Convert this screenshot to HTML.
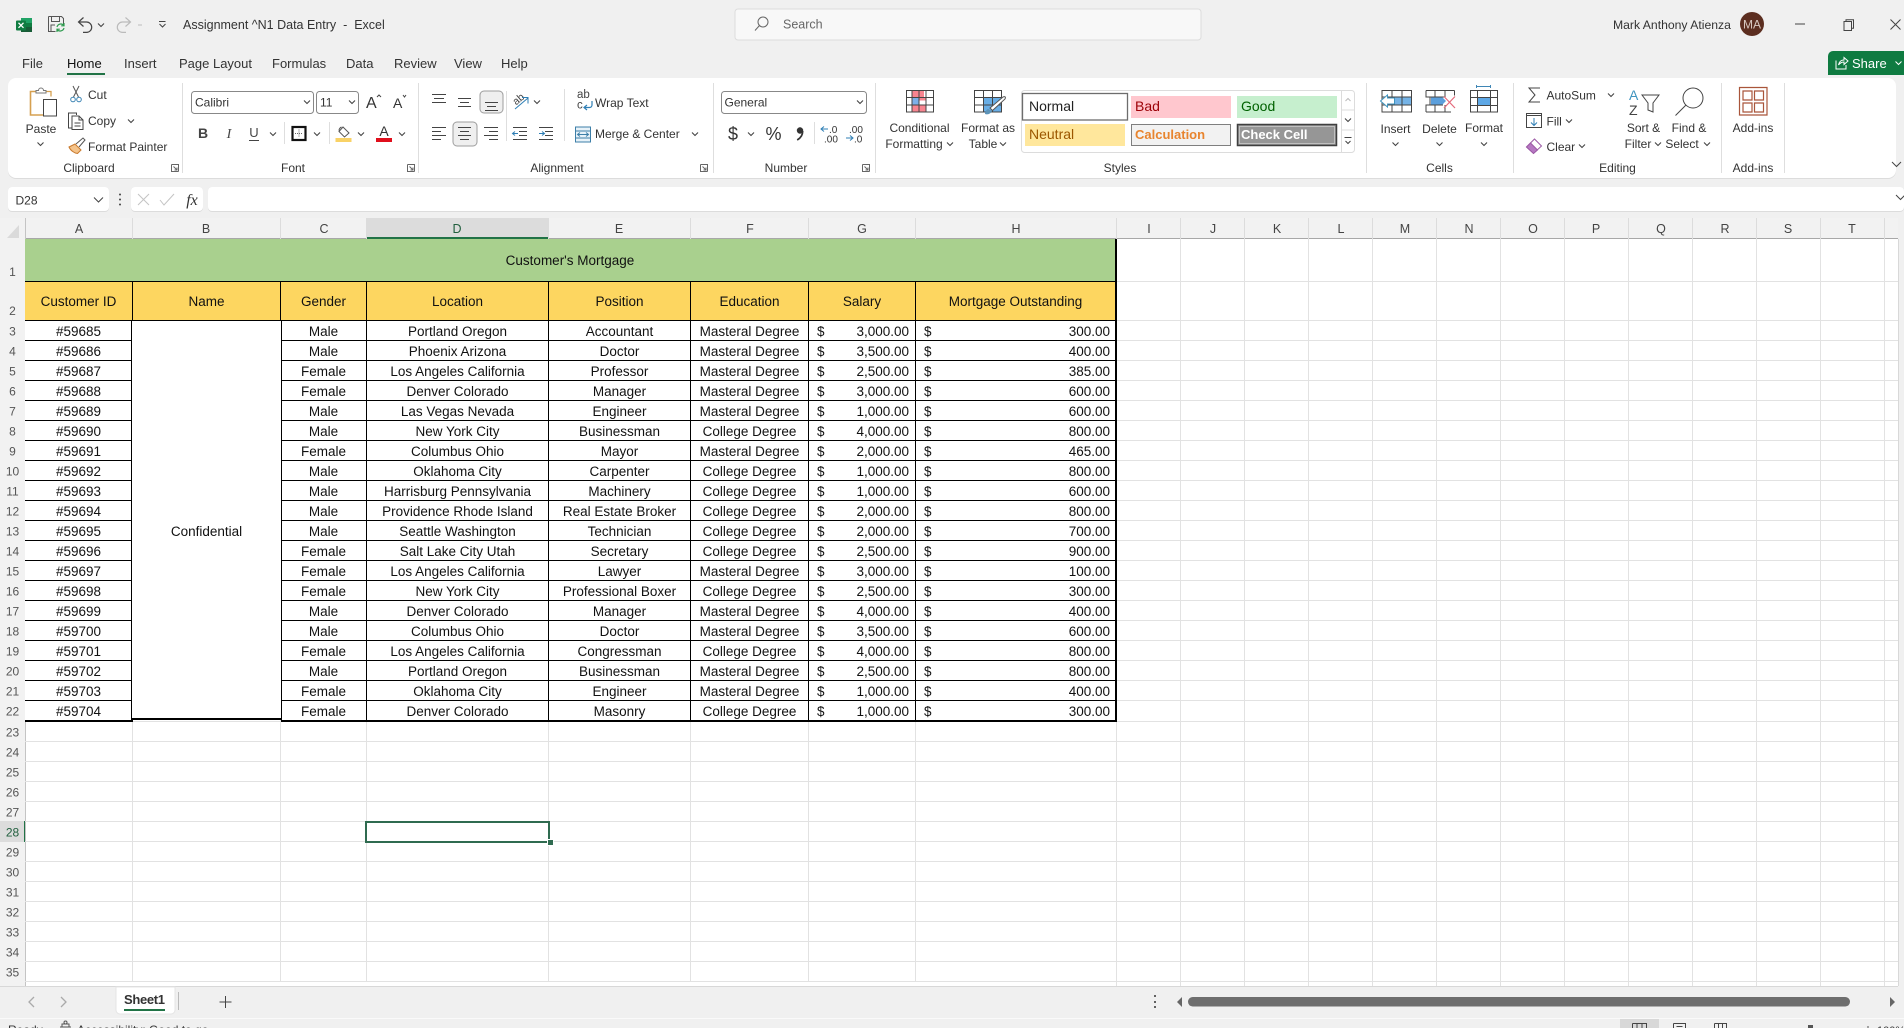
<!DOCTYPE html>
<html><head><meta charset="utf-8"><title>Excel</title>
<style>
html,body{margin:0;padding:0;background:#f0f0f0;width:1904px;height:1028px;overflow:hidden}
svg{position:absolute;left:0;top:0}
svg text{font-family:"Liberation Sans",sans-serif;font-size:12px;fill:#333}
.m{text-anchor:middle}
#g{position:absolute;left:25px;top:239px;display:grid;grid-template-columns:108px 148px 86px 182px 142px 118px 107px 201px;grid-template-rows:43px 39px repeat(19,20px) 21px;font:13.5px "Liberation Sans",sans-serif;color:#111}
#g div{box-sizing:border-box;border-right:1px solid #000;border-bottom:1px solid #000;display:flex;align-items:center;justify-content:center;background:#fff;white-space:nowrap;padding-top:1px}
#g .t{grid-column:1/9;background:#a9d08e;border-right:2px solid #000}
#g .h{background:#fdd660}
#g .r{border-right:2px solid #000}
#g .b{grid-area:3/2/23/3;margin:-1px -1px 2px -2px;border-top:1px solid #000;border-left:1px solid #000;border-right:1px solid #000;border-bottom:2px solid #000;padding-top:23px;z-index:1}
#g div:nth-last-child(-n+7){border-bottom:2px solid #000}
#g div:nth-child(7n+3):nth-child(n+17){border-right:2px solid #000}
#g .m{justify-content:space-between;padding:1px 6px 0 8px}
#g div:nth-child(7n+3):nth-child(n+17){padding-right:5px}
s{text-decoration:none}
#sel{position:absolute;left:365px;top:821px;width:185px;height:22px;box-sizing:border-box;border:2px solid #2f6b50}
#hd{position:absolute;left:547px;top:839px;border:1px solid #fff;width:5px;height:5px;background:#2f6b50}
</style></head><body>
<svg width="1904" height="1028" viewBox="0 0 1904 1028">
<defs>
<path id="v" d="M-3-1.500 0 1.500 3-1.500" fill="none" stroke="#444" stroke-width="1.100"/>
</defs>
<rect width="1904" height="1028" fill="#f0f0f0"/>

<!-- title bar -->
<rect x="21" y="18" width="11" height="14" fill="#185c37"/><rect x="21" y="18" width="11" height="5" fill="#21a366"/><rect x="21" y="23" width="11" height="4" fill="#107c41"/>
<rect x="16" y="20.500" width="10" height="10" rx="1" fill="#107c41"/>
<path d="M18.500 22.800l5 5M23.500 22.800l-5 5" stroke="#fff" stroke-width="1.300"/>
<path d="M48.500 16.500h13l2 2v6M48.500 16.500v15h7M51.500 16.500v5h8v-5M51 31v-6h4" fill="none" stroke="#555"/>
<path d="M57 27a4 4 0 0 1 7-1.500M64 28a4 4 0 0 1-7 1.500M64 23v2.800h-2.800M57 32v-2.800h2.800" fill="none" stroke="#2d9b4e" stroke-width="1.200"/>
<path d="M83.500 17.500l-5 4.500 5 4.500M78.500 22h8a5.200 5.200 0 0 1 0 10.400h-3.500" fill="none" stroke="#444" stroke-width="1.200"/>
<use href="#v" x="101" y="25"/>
<path d="M125.500 17.500l5 4.500-5 4.500M130.500 22h-8a5.200 5.200 0 0 0 0 10.400h3.500" fill="none" stroke="#bbb" stroke-width="1.200"/>
<path d="M138 25h4" stroke="#bbb"/>
<path d="M159 21.500h6.500M159.500 24l3 3 3-3" fill="none" stroke="#444"/>
<text x="183" y="29" xml:space="preserve" style="font-size:12.500px;fill:#333">Assignment ^N1 Data Entry  -  Excel</text>

<rect x="735" y="9" width="466" height="31" rx="3" fill="#f8f8f8" stroke="#dcdcdc"/>
<circle cx="763" cy="22" r="5" fill="none" stroke="#666"/><path d="M759.500 25.500l-4.500 5" stroke="#666"/>
<text x="783" y="28.500" style="font-size:12.500px;fill:#666">Search</text>

<text x="1613" y="29" style="font-size:12.200px">Mark Anthony Atienza</text>
<circle cx="1752" cy="24" r="12" fill="#5c2e20"/><text x="1752" y="28.500" class="m" style="font-size:12px;fill:#d8c8c0">MA</text>
<path d="M1795 24h10" stroke="#444"/>
<path d="M1844 21.500h7.500v9h-7.500zM1846 21.500v-1.800h7.500v8.500h-2" fill="none" stroke="#444"/>
<path d="M1890.500 19.500l10 10M1900.500 19.500l-10 10" stroke="#444"/>

<!-- tabs -->
<text x="22" y="68" style="font-size:13px">File</text>
<text x="67" y="68" style="font-size:13px;fill:#111">Home</text>
<text x="124" y="68" style="font-size:13px">Insert</text>
<text x="179" y="68" style="font-size:13px">Page Layout</text>
<text x="272" y="68" style="font-size:13px">Formulas</text>
<text x="346" y="68" style="font-size:13px">Data</text>
<text x="394" y="68" style="font-size:13px">Review</text>
<text x="454" y="68" style="font-size:13px">View</text>
<text x="501" y="68" style="font-size:13px">Help</text>
<rect x="67" y="73" width="38" height="2" fill="#217346"/>
<path d="M1828 75V56a5 5 0 0 1 5-5h71v24z" fill="#0f7b41"/>
<path d="M1836 60.500v8.500h10v-4M1838.500 65c.5-3 2.500-5 5.500-5v-2.500l4 3.500-4 3.500v-2.500c-2 0-4 1-5.500 3z" fill="none" stroke="#fff"/>
<text x="1852" y="68" style="font-size:13px;fill:#fff">Share</text>
<path d="M1895.500 61.500l3 3 3-3" fill="none" stroke="#fff"/>

<!-- ribbon -->
<rect x="8" y="79" width="1888" height="100" rx="8" fill="#dcdcdc"/>
<rect x="8" y="78" width="1888" height="100" rx="8" fill="#fff"/>
<path d="M182.500 83v90M418.500 83v90M713.500 83v90M875.500 83v90M1366.500 83v90M1513.500 83v90M1721.500 83v90M1784.500 83v90" stroke="#dedede"/>
<path d="M284.500 122v22M329.500 122v22M506.500 91v50M564.500 89v52M814.500 122v22" stroke="#dedede"/>

<!-- clipboard -->
<path d="M36 91.500h-5.500v23.500h13" fill="none" stroke="#d6a050" stroke-width="1.600"/>
<path d="M46 91.500h5v5" fill="none" stroke="#d6a050" stroke-width="1.300"/>
<path d="M36 92.500v-2h2.500a2.500 2.500 0 0 1 5 0H46v2.500h-10z" fill="#fff" stroke="#777"/>
<rect x="43.500" y="99.500" width="13" height="16.500" fill="#fff" stroke="#444"/>
<text x="41" y="133" class="m">Paste</text><use href="#v" x="40.500" y="144"/>
<path d="M73 86l5.500 11M79 86l-5.500 11" stroke="#555" fill="none"/><circle cx="73" cy="99.500" r="2.300" fill="none" stroke="#3f86b5"/><circle cx="79" cy="99.500" r="2.300" fill="none" stroke="#3f86b5"/>
<text x="88" y="99">Cut</text>
<path d="M71.500 128h-3v-15h8l0 2M72 116h7l4 4v9.500H72zM79 116v4h4M74.500 123h6M74.500 126h6" fill="none" stroke="#444"/>
<text x="88" y="125">Copy</text><use href="#v" x="131" y="121"/>
<path d="M69 147l6-3 6 6-3.500 3.500c-3-.2-7-3-8.500-6.500z" fill="#f4c38a" stroke="#c97a2e"/>
<path d="M76 144l7-6 2 2-6 7" fill="#fff" stroke="#555"/>
<text x="88" y="151">Format Painter</text>
<text x="89" y="172" class="m">Clipboard</text>
<path d="M171.500 164.500h7v7M171.500 164.500v7h7M173.500 166.500l3.500 3.500M177 167.500v2.500h-2.500" fill="none" stroke="#666"/>

<!-- font -->
<rect x="191.500" y="91.500" width="122" height="22" rx="3" fill="#fff" stroke="#888"/>
<text x="195" y="106.500">Calibri</text><use href="#v" x="307" y="102"/>
<rect x="316.500" y="91.500" width="42" height="22" rx="3" fill="#fff" stroke="#888"/>
<text x="320" y="106.500">11</text><use href="#v" x="352" y="102"/>
<text x="366" y="108" style="font-size:16px">A</text><path d="M377 97l2-2 2 2" fill="none" stroke="#444"/>
<text x="393" y="108" style="font-size:14px">A</text><path d="M403 95l1.500 2 1.500-2" fill="none" stroke="#444"/>
<text x="203" y="138" class="m" style="font-size:14px;font-weight:bold;fill:#444">B</text>
<text x="229" y="138" class="m" style="font-size:14px;font-style:italic;font-family:'Liberation Serif',serif;fill:#444">I</text>
<text x="254" y="137" class="m" style="font-size:13px;fill:#444">U</text><path d="M249 140.500h10" stroke="#444"/>
<use href="#v" x="273" y="134"/>
<rect x="292.500" y="127" width="13" height="13" fill="none" stroke="#111" stroke-width="2.200"/>
<path d="M299 129.500v8M295 133.500h8" stroke="#666" stroke-dasharray="1 1"/>
<use href="#v" x="317" y="134"/>
<path d="M343 127l6 6-4.500 4-5.500-5.500zM339.500 131c-1-1 0-3 2-4" fill="none" stroke="#555"/><rect x="335.500" y="138" width="16" height="4" fill="#f9d266"/>
<use href="#v" x="361" y="134"/>
<text x="384" y="136" class="m" style="font-size:14px">A</text><rect x="376" y="138" width="16" height="4" fill="#e00f1c"/>
<use href="#v" x="402" y="134"/>
<text x="293" y="172" class="m">Font</text>
<path d="M407.500 164.500h7v7M407.500 164.500v7h7M409.500 166.500l3.500 3.500M413 167.500v2.500h-2.500" fill="none" stroke="#666"/>

<!-- alignment -->
<rect x="480" y="91" width="23" height="22" rx="4" fill="#efefef" stroke="#9d9d9d"/>
<rect x="453" y="122" width="24" height="24" rx="4" fill="#efefef" stroke="#9d9d9d"/>
<path d="M432 94.500h14M434 98.500h10M432 102.500h14M458 98.500h13M460 102.500h9M458 106.500h13M485 102.500h13M487 106.500h9M485 110.500h13" stroke="#444" fill="none"/>
<path d="M432 127.500h14M432 131.500h9M432 135.500h14M432 139.500h9M458 127.500h13M460 131.500h9M458 135.500h13M460 139.500h9M484 127.500h14M489 131.500h9M484 135.500h14M489 139.500h9" stroke="#444" fill="none"/>
<text x="513" y="103" style="font-size:10.500px;fill:#444" transform="rotate(-40 518 100)">ab</text>
<path d="M515 109l13-11M522 97.500h6v6" fill="none" stroke="#2f7fb5"/>
<use href="#v" x="537" y="102"/>
<path d="M513 127.500h14M513 139.500h14M519 131.500h8M519 135.500h8" fill="none" stroke="#444"/>
<path d="M513 133.500h5M515 131.500l-2.500 2 2.500 2" fill="none" stroke="#2f7fb5"/>
<path d="M539 127.500h14M539 139.500h14M545 131.500h8M545 135.500h8" fill="none" stroke="#444"/>
<path d="M539 133.500h5M542 131.500l2.500 2-2.500 2" fill="none" stroke="#2f7fb5"/>
<text x="577" y="98" style="font-size:11.500px;fill:#444">ab</text><text x="577" y="108.500" style="font-size:11.500px;fill:#444">c</text>
<path d="M592 101v4a2.500 2.500 0 0 1-2.500 2.500H584M587 105l-3 2.500 3 2.500" fill="none" stroke="#2f7fb5" stroke-width="1.200"/>
<text x="595" y="107">Wrap Text</text>
<rect x="575.500" y="127" width="15" height="15" fill="#e7f2f9" stroke="#3d7fa8"/><path d="M575.500 131h15M575.500 138h15M578 134.500h10M580 132.500l-2.500 2 2.500 2M586 132.500l2.500 2-2.500 2" fill="none" stroke="#3d7fa8"/>
<text x="595" y="138">Merge &amp; Center</text><use href="#v" x="695" y="134"/>
<text x="557" y="172" class="m">Alignment</text>
<path d="M700.500 164.500h7v7M700.500 164.500v7h7M702.500 166.500l3.500 3.500M706 167.500v2.500h-2.500" fill="none" stroke="#666"/>

<!-- number -->
<rect x="721.500" y="91.500" width="145" height="22" rx="3" fill="#fff" stroke="#888"/>
<text x="724.500" y="106.500">General</text><use href="#v" x="860" y="102"/>
<text x="733" y="140" class="m" style="font-size:18px">$</text><use href="#v" x="751" y="134"/>
<text x="773.500" y="140" class="m" style="font-size:18px">%</text>
<circle cx="800" cy="130.500" r="3.200" fill="#333"/><path d="M802.700 131c0 4-2 7-5.500 9" fill="none" stroke="#333" stroke-width="1.700"/>
<path d="M828 129h-7M824 126.500l-3 2.500 3 2.500" fill="none" stroke="#2f7fb5"/>
<text x="829" y="133" style="font-size:10px">.0</text><text x="824" y="142.500" style="font-size:10px">.00</text>
<text x="849" y="133" style="font-size:10px">.00</text>
<path d="M846 138h7M850 135.500l3 2.500-3 2.500" fill="none" stroke="#2f7fb5"/><text x="854" y="142.500" style="font-size:10px">.0</text>
<text x="786" y="172" class="m">Number</text>
<path d="M862.500 164.500h7v7M862.500 164.500v7h7M864.500 166.500l3.500 3.500M868 167.500v2.500h-2.500" fill="none" stroke="#666"/>

<!-- styles group -->
<path d="M912 90.500h12v6.500h2v3.500h-7v4h7v7h-14z" fill="#f7848f"/><rect x="912" y="97" width="7" height="7.500" fill="#7cb0e8"/>
<path d="M906.500 90.500h27v21.500h-27zM906.500 97.500h27M906.500 105h27M912 90.500v21.500M919 90.500v21.500M926 90.500v21.500" fill="none" stroke="#444"/>
<text x="919.500" y="132" class="m">Conditional</text><text x="914" y="148" class="m">Formatting</text><use href="#v" x="950" y="144"/>
<rect x="983" y="97" width="18" height="15" fill="#69aee6"/>
<path d="M974.500 90.500h27v21.500h-27zM974.500 97.500h27M974.500 105h27M983.500 90.500v21.500M992.500 90.500v21.500" fill="none" stroke="#444"/>
<path d="M1003 97l-13 11 2.500 2.500L1005 99c1-2-0-3-2-2z" fill="#fff" stroke="#555"/><path d="M988 109c-2 1-3 3-3 5 3 1 6-.5 7-3z" fill="#5c93b8"/>
<text x="988" y="132" class="m">Format as</text><text x="983" y="148" class="m">Table</text><use href="#v" x="1003" y="144"/>

<rect x="1021.500" y="90.500" width="333" height="62" rx="3" fill="#fff" stroke="#dcdcdc"/>
<rect x="1022.500" y="93.500" width="105" height="26.500" fill="#fff" stroke="#6d6d6d" stroke-width="1.300"/>
<text x="1029" y="111" style="font-size:14px;fill:#222">Normal</text>
<rect x="1131" y="96" width="100" height="22" fill="#ffc7ce"/><text x="1135" y="111" style="font-size:14px;fill:#9c0006">Bad</text>
<rect x="1237" y="96" width="100" height="22" fill="#c6efce"/><text x="1241" y="111" style="font-size:14px;fill:#006100">Good</text>
<rect x="1025" y="124" width="100" height="22" fill="#ffe79c"/><text x="1029" y="139" style="font-size:14px;fill:#9c5700">Neutral</text>
<rect x="1131.500" y="124.500" width="99" height="21" fill="#f2f2f2" stroke="#7f7f7f"/><text x="1135" y="139" style="font-size:13px;font-weight:bold;fill:#e8842e">Calculation</text>
<rect x="1237.500" y="124.500" width="99" height="21" fill="#969696" stroke="#3f3f3f" stroke-width="1.500"/><rect x="1239.500" y="126.500" width="95" height="17" fill="none" stroke="#ddd" stroke-width=".6"/><text x="1241" y="139" style="font-size:13px;font-weight:bold;fill:#fff">Check Cell</text>
<path d="M1341.500 90.500v62M1341.500 110h13M1341.500 130h13" stroke="#dcdcdc" fill="none"/>
<path d="M1345.500 101l2.500-2.500 2.500 2.500" fill="none" stroke="#bbb"/>
<use href="#v" x="1348" y="120"/>
<path d="M1344.500 137.500h7M1345.500 141l2.500 2.500 2.500-2.500" fill="none" stroke="#444"/>
<text x="1120" y="172" class="m">Styles</text>

<!-- cells -->
<rect x="1391" y="97" width="20.500" height="8" fill="#75b3e6"/>
<path d="M1382 90.500h29.500v21.500h-29.500zM1382 97h29.500M1382 105h29.500M1392 90.500v21.500M1402 90.500v21.500" fill="none" stroke="#444"/>
<path d="M1380.500 101l7-6v3h7v6h-7v3z" fill="#fff" stroke="#3f94bf"/>
<text x="1395.500" y="133" class="m">Insert</text><use href="#v" x="1395.500" y="144"/>
<path d="M1431 97h11l4 4-4 4h-11z" fill="#5b9fdc"/>
<path d="M1426 90.500h28.500M1426 112h25M1426 90.500v6.500h4v8h-4v7M1435 90.500v6.500M1445 90.500v6.500M1435 105v7M1445 105v7M1454.500 90.500v5M1426 97h18M1426 105h17" fill="none" stroke="#444"/>
<path d="M1444 96.500l11 11.500M1455 96.500l-11 11.500" stroke="#e4697a" stroke-width="1.200"/>
<text x="1439.500" y="133" class="m">Delete</text><use href="#v" x="1439.500" y="144"/>
<rect x="1477" y="97" width="13" height="8" fill="#5ea8e6"/>
<path d="M1470.500 90.500h27v21.500h-27zM1470.500 97.500h27M1470.500 105.500h27M1477.500 90.500v21.500M1490.500 90.500v21.500" fill="none" stroke="#444"/>
<path d="M1476.500 86.500h14M1476.500 85v3M1490.500 85v3" stroke="#3f86b5" fill="none"/>
<text x="1484" y="132" class="m">Format</text><use href="#v" x="1484" y="144"/>
<text x="1439.500" y="172" class="m">Cells</text>

<!-- editing -->
<path d="M1540 88h-11l6 7-6 7h11" fill="none" stroke="#444"/>
<text x="1546.500" y="99.500">AutoSum</text><use href="#v" x="1611" y="95"/>
<rect x="1526.500" y="113.500" width="15" height="14" fill="none" stroke="#444"/><path d="M1526.500 115.500h15" stroke="#444"/><path d="M1534 118v7M1531 122.500l3 3 3-3" fill="none" stroke="#2f7fb5"/>
<text x="1546.500" y="125.500">Fill</text><use href="#v" x="1569" y="121"/>
<path d="M1526.500 147l8-8 7 7-8 7.500z" fill="#fff" stroke="#9c5aa6"/><path d="M1526.500 147l4-4 7 7-4 3.500z" fill="#b678c2" stroke="#9c5aa6"/>
<text x="1546.500" y="151">Clear</text><use href="#v" x="1582" y="146"/>
<text x="1629" y="100" style="font-size:14px;fill:#3f94bf">A</text><text x="1629" y="115" style="font-size:14px;fill:#444">Z</text>
<path d="M1642 95h17l-6 8v9l-5-2v-7z" fill="none" stroke="#444"/>
<text x="1643.500" y="132" class="m">Sort &amp;</text><text x="1638" y="148" class="m">Filter</text><use href="#v" x="1658" y="144"/>
<circle cx="1693" cy="98" r="10" fill="none" stroke="#444"/><path d="M1686 105l-10.500 10.500" stroke="#444"/>
<text x="1689" y="132" class="m">Find &amp;</text><text x="1682" y="148" class="m">Select</text><use href="#v" x="1707" y="144"/>
<text x="1617.500" y="172" class="m">Editing</text>

<path d="M1739.500 87.500h27.500v27.500h-27.500z" fill="none" stroke="#a9553a" stroke-width="1.200"/>
<path d="M1743 91h9v9h-9zM1754.500 91h9v9h-9zM1743 103h9v9h-9zM1754.500 103h9v9h-9z" fill="none" stroke="#a9553a" stroke-width="1.200"/>
<text x="1753" y="132" class="m">Add-ins</text><text x="1753" y="172" class="m">Add-ins</text>
<path d="M1892 162l4.500 4.500 4.500-4.500" fill="none" stroke="#444"/>

<!-- formula bar -->
<rect x="8" y="187" width="101" height="25" rx="4" fill="#dcdcdc"/><rect x="8" y="187" width="101" height="24" rx="4" fill="#fff"/>
<text x="15.500" y="204.500">D28</text><path d="M94 197.500l4.500 4.500 4.500-4.500" fill="none" stroke="#444"/>
<circle cx="120" cy="194.500" r="1" fill="#444"/><circle cx="120" cy="199.500" r="1" fill="#444"/><circle cx="120" cy="204.500" r="1" fill="#444"/>
<rect x="131" y="187" width="72" height="25" rx="4" fill="#dcdcdc"/><rect x="131" y="187" width="72" height="24" rx="4" fill="#fff"/>
<path d="M138 194l11 11M149 194l-11 11M160 200l4 5 10-11" fill="none" stroke="#c4c4c4"/>
<text x="192" y="205" class="m" style="font-family:'Liberation Serif',serif;font-style:italic;font-size:16px;fill:#333">fx</text>
<rect x="208" y="187" width="1696" height="25" rx="4" fill="#dcdcdc"/><rect x="208" y="187" width="1696" height="24" rx="4" fill="#fff"/>
<path d="M1896 195l4.500 4.500 4.500-4.500" fill="none" stroke="#444"/>

<!-- sheet -->
<rect x="25" y="239" width="1873" height="747" fill="#fff"/>
<rect x="0" y="218" width="1898" height="21" fill="#f2f2f2"/>
<rect x="0" y="239" width="25" height="747" fill="#f2f2f2"/>
<path d="M19 225v13H7z" fill="#dadada"/>
<rect x="366" y="218" width="183" height="19" fill="#dcdcdc"/>
<rect x="25" y="238" width="1873" height="1" fill="#a8a8a8"/>
<rect x="366" y="237" width="183" height="2" fill="#217346"/>
<rect x="0" y="821" width="25" height="21" fill="#dcdcdc"/>
<rect x="24" y="821" width="2" height="21" fill="#217346"/>
<path d="M25.500 218v768" stroke="#c4c4c4" fill="none"/>
<path d="M132.500 218v21M280.500 218v21M366.500 218v21M548.500 218v21M690.500 218v21M808.500 218v21M915.500 218v21M1116.500 218v21M1180.500 218v21M1244.500 218v21M1308.500 218v21M1372.500 218v21M1436.500 218v21M1500.500 218v21M1564.500 218v21M1628.500 218v21M1692.500 218v21M1756.500 218v21M1820.500 218v21M1884.500 218v21" stroke="#dcdcdc" fill="none"/>
<path d="M132.500 239v743M280.500 239v743M366.500 239v743M548.500 239v743M690.500 239v743M808.500 239v743M915.500 239v743M1116.500 239v747M1180.500 239v747M1244.500 239v747M1308.500 239v747M1372.500 239v747M1436.500 239v747M1500.500 239v747M1564.500 239v747M1628.500 239v747M1692.500 239v747M1756.500 239v747M1820.500 239v747M1884.500 239v747" stroke="#e2e2e2" fill="none"/>
<path d="M25 281.500h1873M25 320.500h1873M25 340.500h1873M25 360.500h1873M25 380.500h1873M25 400.500h1873M25 420.500h1873M25 440.500h1873M25 460.500h1873M25 480.500h1873M25 500.500h1873M25 520.500h1873M25 540.500h1873M25 560.500h1873M25 580.500h1873M25 600.500h1873M25 620.500h1873M25 640.500h1873M25 660.500h1873M25 680.500h1873M25 700.500h1873M25 721.500h1873M25 741.500h1873M25 761.500h1873M25 781.500h1873M25 801.500h1873M25 821.500h1873M25 841.500h1873M25 861.500h1873M25 881.500h1873M25 901.500h1873M25 921.500h1873M25 941.500h1873M25 961.500h1873M25 981.500h1873" stroke="#e2e2e2" fill="none"/>
<path d="M1898.500 239v747M0 986.500h1898" stroke="#d8d8d8" fill="none"/>
<text x="79" y="233" class="m" style="font-size:12.500px;fill:#444">A</text><text x="206" y="233" class="m" style="font-size:12.500px;fill:#444">B</text><text x="324" y="233" class="m" style="font-size:12.500px;fill:#444">C</text><text x="457" y="233" class="m" style="font-size:12.500px;fill:#215f3e">D</text><text x="619" y="233" class="m" style="font-size:12.500px;fill:#444">E</text><text x="750" y="233" class="m" style="font-size:12.500px;fill:#444">F</text><text x="862" y="233" class="m" style="font-size:12.500px;fill:#444">G</text><text x="1016" y="233" class="m" style="font-size:12.500px;fill:#444">H</text><text x="1149" y="233" class="m" style="font-size:12.500px;fill:#444">I</text><text x="1213" y="233" class="m" style="font-size:12.500px;fill:#444">J</text><text x="1277" y="233" class="m" style="font-size:12.500px;fill:#444">K</text><text x="1341" y="233" class="m" style="font-size:12.500px;fill:#444">L</text><text x="1405" y="233" class="m" style="font-size:12.500px;fill:#444">M</text><text x="1469" y="233" class="m" style="font-size:12.500px;fill:#444">N</text><text x="1533" y="233" class="m" style="font-size:12.500px;fill:#444">O</text><text x="1596" y="233" class="m" style="font-size:12.500px;fill:#444">P</text><text x="1661" y="233" class="m" style="font-size:12.500px;fill:#444">Q</text><text x="1725" y="233" class="m" style="font-size:12.500px;fill:#444">R</text><text x="1788" y="233" class="m" style="font-size:12.500px;fill:#444">S</text><text x="1852" y="233" class="m" style="font-size:12.500px;fill:#444">T</text>
<text x="12.500" y="276" class="m" style="fill:#555">1</text><text x="12.500" y="315" class="m" style="fill:#555">2</text><text x="12.500" y="335.500" class="m" style="fill:#555">3</text><text x="12.500" y="355.500" class="m" style="fill:#555">4</text><text x="12.500" y="375.500" class="m" style="fill:#555">5</text><text x="12.500" y="395.500" class="m" style="fill:#555">6</text><text x="12.500" y="415.500" class="m" style="fill:#555">7</text><text x="12.500" y="435.500" class="m" style="fill:#555">8</text><text x="12.500" y="455.500" class="m" style="fill:#555">9</text><text x="12.500" y="475.500" class="m" style="fill:#555">10</text><text x="12.500" y="495.500" class="m" style="fill:#555">11</text><text x="12.500" y="515.500" class="m" style="fill:#555">12</text><text x="12.500" y="535.500" class="m" style="fill:#555">13</text><text x="12.500" y="555.500" class="m" style="fill:#555">14</text><text x="12.500" y="575.500" class="m" style="fill:#555">15</text><text x="12.500" y="595.500" class="m" style="fill:#555">16</text><text x="12.500" y="615.500" class="m" style="fill:#555">17</text><text x="12.500" y="635.500" class="m" style="fill:#555">18</text><text x="12.500" y="655.500" class="m" style="fill:#555">19</text><text x="12.500" y="675.500" class="m" style="fill:#555">20</text><text x="12.500" y="695.500" class="m" style="fill:#555">21</text><text x="12.500" y="715.500" class="m" style="fill:#555">22</text><text x="12.500" y="736.500" class="m" style="fill:#555">23</text><text x="12.500" y="756.500" class="m" style="fill:#555">24</text><text x="12.500" y="776.500" class="m" style="fill:#555">25</text><text x="12.500" y="796.500" class="m" style="fill:#555">26</text><text x="12.500" y="816.500" class="m" style="fill:#555">27</text><text x="12.500" y="836.500" class="m" style="fill:#215f3e">28</text><text x="12.500" y="856.500" class="m" style="fill:#555">29</text><text x="12.500" y="876.500" class="m" style="fill:#555">30</text><text x="12.500" y="896.500" class="m" style="fill:#555">31</text><text x="12.500" y="916.500" class="m" style="fill:#555">32</text><text x="12.500" y="936.500" class="m" style="fill:#555">33</text><text x="12.500" y="956.500" class="m" style="fill:#555">34</text><text x="12.500" y="976.500" class="m" style="fill:#555">35</text>

<!-- sheet tabs -->
<path d="M116 987h59v23a4 4 0 0 1-4 4h-51a4 4 0 0 1-4-4z" fill="#fff" stroke="#e4e4e4"/>
<text x="144.500" y="1004" class="m" style="font-size:13px;font-weight:bold;fill:#333" textLength="41">Sheet1</text>
<rect x="124" y="1009" width="41" height="2" fill="#217346"/>
<path d="M178.500 992v18" stroke="#bbb"/>
<path d="M34 997l-5 5 5 5M61 997l5 5-5 5" fill="none" stroke="#aaa" stroke-width="1.300"/>
<path d="M225.500 996v12M219.500 1002h12" stroke="#444"/>
<circle cx="1155" cy="996" r="1" fill="#333"/><circle cx="1155" cy="1002" r="1" fill="#333"/><circle cx="1155" cy="1007" r="1" fill="#333"/>
<path d="M1177 1002l5-5v10z" fill="#666"/>
<rect x="1188" y="997" width="662" height="9.500" rx="4.700" fill="#6e6e6e"/>
<path d="M1895 1002l-5-5v10z" fill="#666"/>
<path d="M0 1018.500h1904" stroke="#fafafa"/>

<!-- status bar -->
<text x="8" y="1034">Ready</text>
<path d="M60 1027h11M62 1027v-3h7v3M65.500 1021a1.500 1.500 0 1 1 0 3 1.500 1.500 0 1 1 0-3" fill="none" stroke="#555"/>
<text x="77" y="1034">Accessibility: Good to go</text>
<rect x="1620" y="1019" width="39" height="9" fill="#d8d8d8"/>
<path d="M1632.500 1023.500h14v6M1632.500 1023.500v6M1637 1023v6M1642 1023v6" fill="none" stroke="#444"/>
<path d="M1673.500 1023.500h12v6M1673.500 1023.500v6M1676.500 1026.500h6" fill="none" stroke="#444"/>
<path d="M1714.500 1023.500h12v6M1714.500 1023.500v6M1718.500 1023v6M1722.500 1023v6" fill="none" stroke="#444"/>
<rect x="1808" y="1025" width="5" height="3" fill="#555"/><path d="M1868 1026v3" stroke="#555"/>
<text x="1877" y="1034" style="font-size:11px">100%</text>
</svg>

<div id="g">
<div class="t">Customer's Mortgage</div>
<div class="h">Customer ID</div><div class="h">Name</div><div class="h">Gender</div><div class="h">Location</div><div class="h">Position</div><div class="h">Education</div><div class="h">Salary</div><div class="h r">Mortgage Outstanding</div>
<div class="b">Confidential</div>
<div>#59685</div><div>Male</div><div>Portland Oregon</div><div>Accountant</div><div>Masteral Degree</div><div class="m"><s>$</s>3,000.00</div><div class="m"><s>$</s>300.00</div>
<div>#59686</div><div>Male</div><div>Phoenix Arizona</div><div>Doctor</div><div>Masteral Degree</div><div class="m"><s>$</s>3,500.00</div><div class="m"><s>$</s>400.00</div>
<div>#59687</div><div>Female</div><div>Los Angeles California</div><div>Professor</div><div>Masteral Degree</div><div class="m"><s>$</s>2,500.00</div><div class="m"><s>$</s>385.00</div>
<div>#59688</div><div>Female</div><div>Denver Colorado</div><div>Manager</div><div>Masteral Degree</div><div class="m"><s>$</s>3,000.00</div><div class="m"><s>$</s>600.00</div>
<div>#59689</div><div>Male</div><div>Las Vegas Nevada</div><div>Engineer</div><div>Masteral Degree</div><div class="m"><s>$</s>1,000.00</div><div class="m"><s>$</s>600.00</div>
<div>#59690</div><div>Male</div><div>New York City</div><div>Businessman</div><div>College Degree</div><div class="m"><s>$</s>4,000.00</div><div class="m"><s>$</s>800.00</div>
<div>#59691</div><div>Female</div><div>Columbus Ohio</div><div>Mayor</div><div>Masteral Degree</div><div class="m"><s>$</s>2,000.00</div><div class="m"><s>$</s>465.00</div>
<div>#59692</div><div>Male</div><div>Oklahoma City</div><div>Carpenter</div><div>College Degree</div><div class="m"><s>$</s>1,000.00</div><div class="m"><s>$</s>800.00</div>
<div>#59693</div><div>Male</div><div>Harrisburg Pennsylvania</div><div>Machinery</div><div>College Degree</div><div class="m"><s>$</s>1,000.00</div><div class="m"><s>$</s>600.00</div>
<div>#59694</div><div>Male</div><div>Providence Rhode Island</div><div>Real Estate Broker</div><div>College Degree</div><div class="m"><s>$</s>2,000.00</div><div class="m"><s>$</s>800.00</div>
<div>#59695</div><div>Male</div><div>Seattle Washington</div><div>Technician</div><div>College Degree</div><div class="m"><s>$</s>2,000.00</div><div class="m"><s>$</s>700.00</div>
<div>#59696</div><div>Female</div><div>Salt Lake City Utah</div><div>Secretary</div><div>College Degree</div><div class="m"><s>$</s>2,500.00</div><div class="m"><s>$</s>900.00</div>
<div>#59697</div><div>Female</div><div>Los Angeles California</div><div>Lawyer</div><div>Masteral Degree</div><div class="m"><s>$</s>3,000.00</div><div class="m"><s>$</s>100.00</div>
<div>#59698</div><div>Female</div><div>New York City</div><div>Professional Boxer</div><div>College Degree</div><div class="m"><s>$</s>2,500.00</div><div class="m"><s>$</s>300.00</div>
<div>#59699</div><div>Male</div><div>Denver Colorado</div><div>Manager</div><div>Masteral Degree</div><div class="m"><s>$</s>4,000.00</div><div class="m"><s>$</s>400.00</div>
<div>#59700</div><div>Male</div><div>Columbus Ohio</div><div>Doctor</div><div>Masteral Degree</div><div class="m"><s>$</s>3,500.00</div><div class="m"><s>$</s>600.00</div>
<div>#59701</div><div>Female</div><div>Los Angeles California</div><div>Congressman</div><div>College Degree</div><div class="m"><s>$</s>4,000.00</div><div class="m"><s>$</s>800.00</div>
<div>#59702</div><div>Male</div><div>Portland Oregon</div><div>Businessman</div><div>Masteral Degree</div><div class="m"><s>$</s>2,500.00</div><div class="m"><s>$</s>800.00</div>
<div>#59703</div><div>Female</div><div>Oklahoma City</div><div>Engineer</div><div>Masteral Degree</div><div class="m"><s>$</s>1,000.00</div><div class="m"><s>$</s>400.00</div>
<div>#59704</div><div>Female</div><div>Denver Colorado</div><div>Masonry</div><div>College Degree</div><div class="m"><s>$</s>1,000.00</div><div class="m"><s>$</s>300.00</div>
</div>
<div id="sel"></div><div id="hd"></div>
</body></html>
